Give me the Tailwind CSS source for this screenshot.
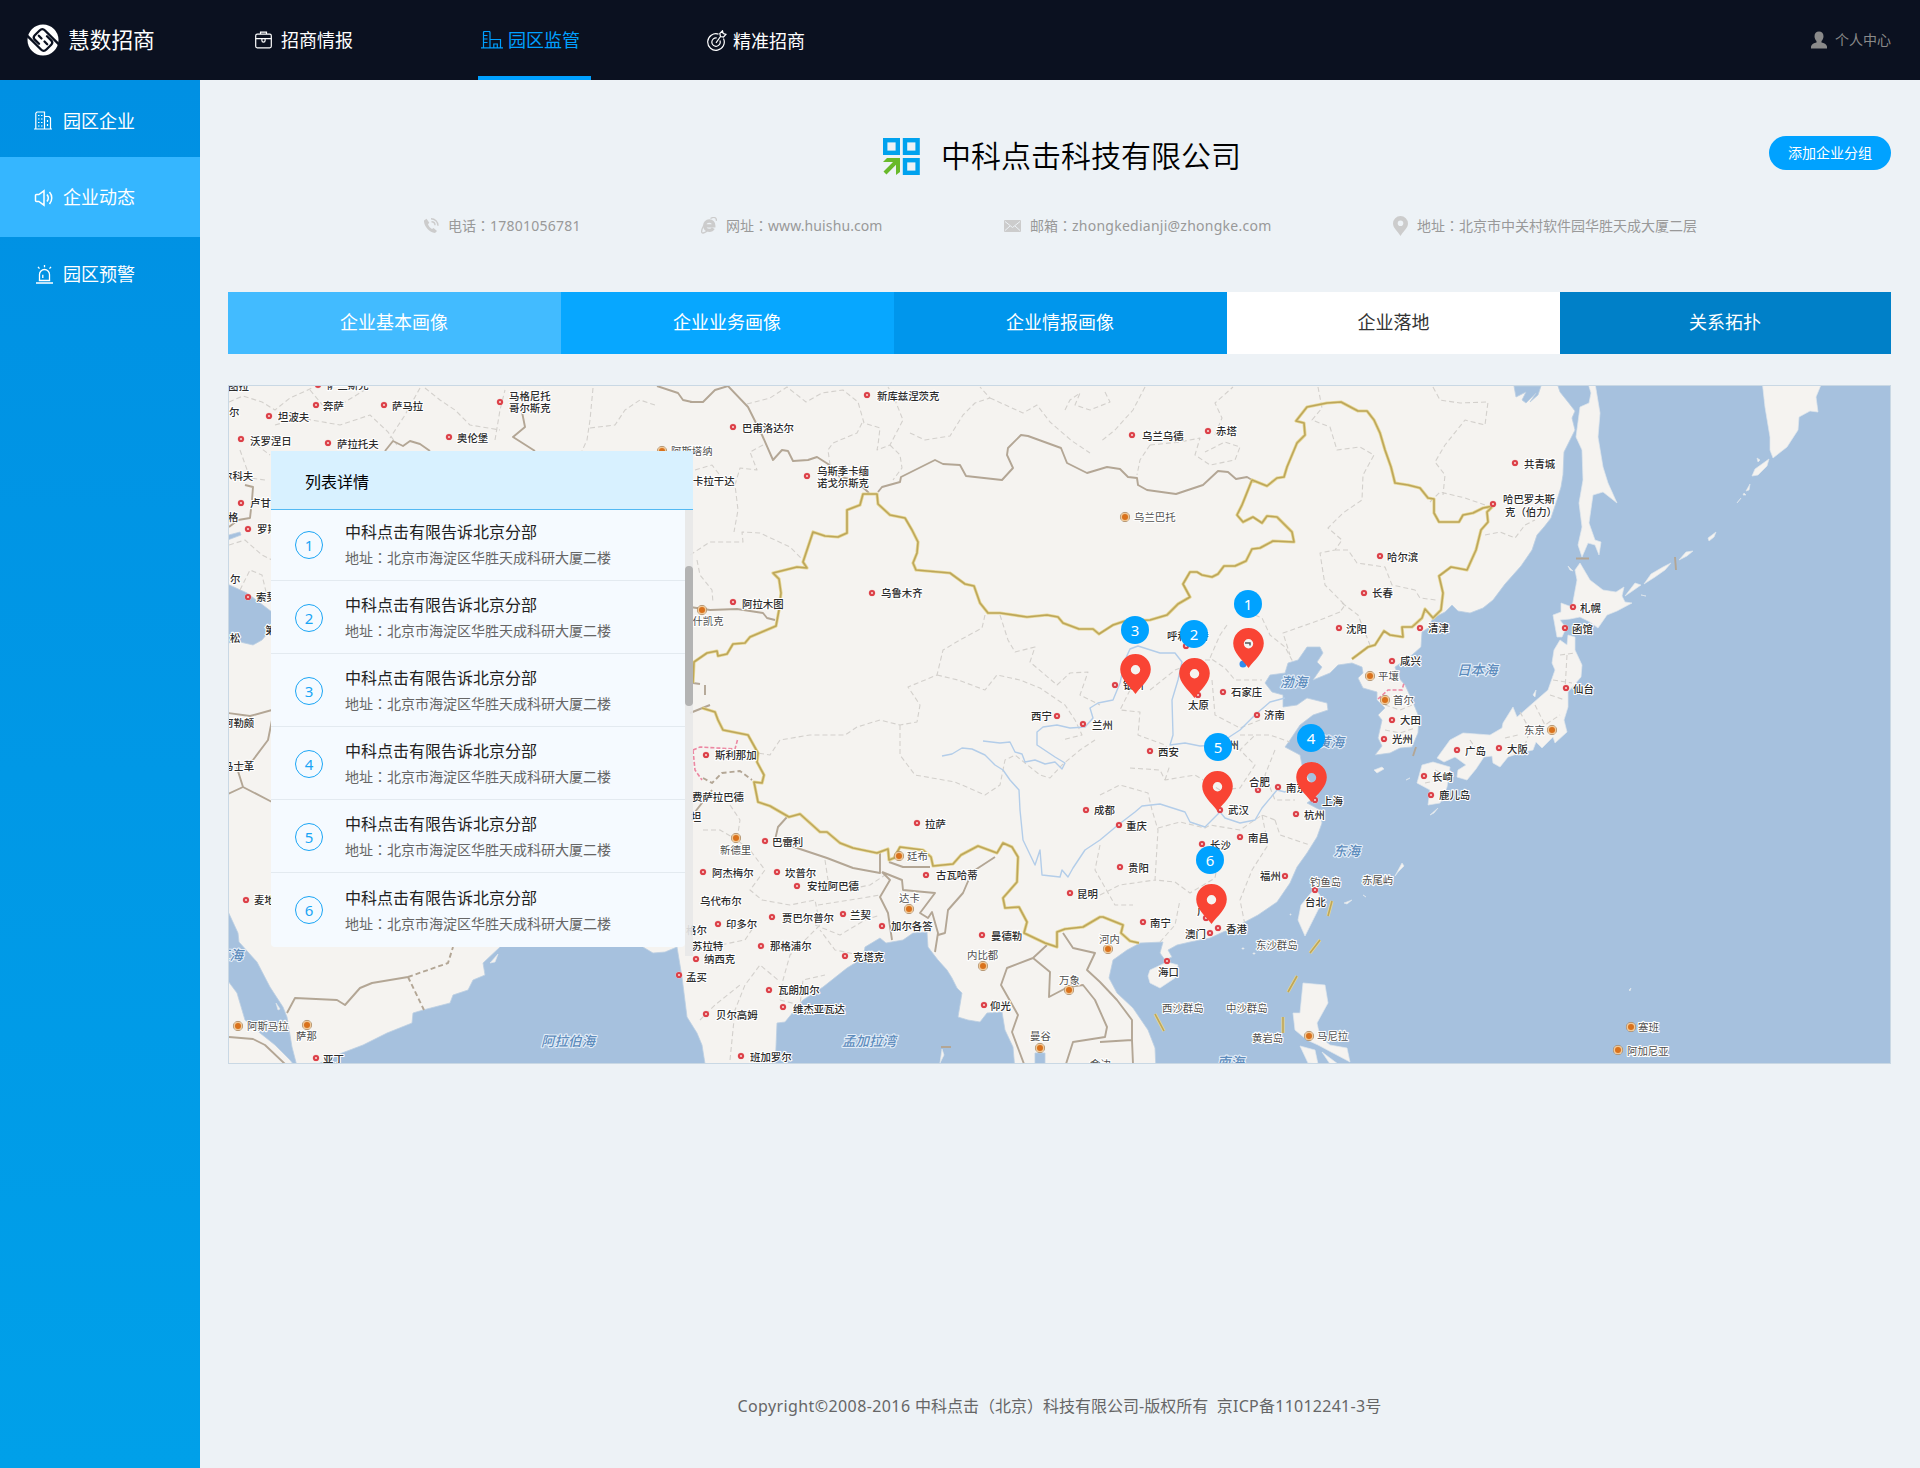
<!DOCTYPE html>
<html lang="zh-CN">
<head>
<meta charset="utf-8">
<title>慧数招商</title>
<script src="https://cdn.jsdelivr.net/npm/@tailwindcss/browser@4"></script>
</head>
<body class="flex h-[1468px] w-[1920px] flex-col overflow-hidden bg-[#edf2f6] font-['Noto_Sans','Noto_Sans_CJK_SC',sans-serif] text-[#222]">

<!-- top bar -->
<header class="flex h-20 shrink-0 items-center bg-[#0b1120] text-white">
  <div class="flex w-[252px] items-center pl-[27px]">
    <svg class="size-8 shrink-0" viewBox="0 0 32 32">
      <circle cx="16" cy="16" r="15.500" fill="#fff"/>
      <g fill="none" stroke="#0b1120" stroke-width="2.300" stroke-linecap="round">
        <path d="M-1 10.500 14 25.500c1.800 1.800 3.600 1.800 5.400 0l4.800-4.800c1.500-1.500 1.500-2.800 0-4.300L20 12.200"/>
        <path d="M33 21.500 18 6.500c-1.800-1.800-3.600-1.800-5.400 0L7.800 11.300c-1.500 1.500-1.500 2.800 0 4.300L12 19.800"/>
        <path d="M11.800 11.800 14.500 14.500M20.200 20.200 17.500 17.500"/>
      </g>
    </svg>
    <span class="ml-[9px] text-[21.700px] leading-8 whitespace-nowrap">慧数招商</span>
  </div>
  <nav class="flex h-full gap-[113px] text-lg whitespace-nowrap">
    <a class="flex w-[113px] items-center pl-[3px]">
      <svg class="mr-[9px] h-[18px] w-[17px]" viewBox="0 0 17 18" fill="none" stroke="#fff" stroke-width="1.200"><rect x=".7" y="3.200" width="15.600" height="13.600" rx="1.500"/><path d="M5.500 3V1.200h6V3M.7 7.700h15.600M6.900 7.700v1.800a1.600 1.600 0 0 0 3.200 0V7.700"/></svg>
      <span>招商情报</span>
    </a>
    <a class="flex w-[113px] items-center border-b-4 border-[#00a0ff] pt-[3px] pl-[3px] text-[#00a0ff]">
      <svg class="mr-[5px] h-[18px] w-[22px]" viewBox="0 0 22 18" fill="none" stroke="currentColor" stroke-width="1.200"><path d="M0 16.800h22M2.500 16.500V1.500a1 1 0 0 1 1-1h4.500a1 1 0 0 1 1 1v15M2.500 4.500h4M2.500 8h4M2.500 11.500h4M9 8.500h10.500V16.500M12.800 16.500v-3.500h3.500v3.500"/></svg>
      <span>园区监管</span>
    </a>
    <a class="flex w-[113px] items-center pt-0.5 pl-[3px]">
      <svg class="mr-[6px] h-[22px] w-5" viewBox="0 0 20 22" fill="none" stroke="#fff" stroke-width="1.200"><path d="M11.500 4.100A8.300 8.300 0 1 0 16.500 8.500M9.800 8a4.200 4.200 0 1 0 3.100 2.500M9 12.800 13.500 6.500M13.500 6.500 12.800 3.500 15.500.8l.7 2.700 2.800.8-2.500 2.700z"/></svg>
      <span>精准招商</span>
    </a>
  </nav>
  <div class="mr-[29px] ml-auto flex items-center text-sm text-[#8a8a8a]">
    <svg class="mr-2 h-[18px] w-4" viewBox="0 0 16 18" fill="#8a8a8a"><path d="M8 .5c2.800 0 4.500 2 4.500 4.700 0 2-1 3.800-2 4.800v1.500c2.500.8 5 1.500 5.500 4V17.500H0v-2c.5-2.500 3-3.200 5.500-4V10c-1-1-2-2.800-2-4.800C3.500 2.500 5.200.5 8 .5z"/></svg>
    <span>个人中心</span>
  </div>
</header>

<div class="flex min-h-0 flex-1">
  <!-- side menu -->
  <aside class="w-[200px] shrink-0 bg-linear-to-b from-[#0090e3] to-[#00a0e9] text-lg text-white">
    <a class="flex h-[77px] items-center pl-[34px]">
      <svg class="mt-1 mr-[11px] h-[19px] w-[18px]" viewBox="0 0 18 19" fill="none" stroke="#fff" stroke-width="1.200"><path d="M0 18h18M1.800 18V2.200L3 1h7.500v17M10.500 5.500H15l1.500 1.500v11M4 4.500h1.500M7 4.500h1.500M4 8h1.500M7 8h1.500M4 11.500h1.500M7 11.500h1.500M4 15h1.500M7 15h1.500M13.500 9v2M13.500 13v2"/></svg>
      <span class="mt-1">园区企业</span>
    </a>
    <a class="flex h-[80px] items-center bg-[#35b6ff] pl-[34px]">
      <svg class="mt-0.5 mr-[9px] h-[18px] w-5" viewBox="0 0 20 18" fill="none" stroke="#fff" stroke-width="1.500"><path d="M4.800 12.500H2.500a1 1 0 0 1-1-1v-5a1 1 0 0 1 1-1H4.800L10 1.800v14.400zM13 5.500c1.500 2 1.500 5 0 7M15.500 3c3 3.500 3 8.500 0 12"/></svg>
      <span>企业动态</span>
    </a>
    <a class="flex h-[74px] items-center pl-[35px]">
      <svg class="mr-[9px] h-[19px] w-[19px]" viewBox="0 0 19 19" fill="none" stroke="#fff" stroke-width="1.300"><path d="M1 18h17M3.800 15.500h11.400M4.500 15.500V9.500a5 5 0 0 1 10 0v6M7.800 13V9.800M9.500 0v2.200M3 1.800l1.500 1.800M16 1.800l-1.500 1.800"/></svg>
      <span class="-mt-px">园区预警</span>
    </a>
  </aside>

  <main class="flex flex-1 flex-col pr-[29px] pl-7">
    <!-- company heading -->
    <div class="mt-[52px] flex h-11 items-center pl-[655px]">
      <svg class="mt-1 size-[37px]" viewBox="0 0 37 37"><g fill="none" stroke="#00a2ee" stroke-width="4.400"><rect x="2.200" y="2.200" width="12.600" height="12.600"/><rect x="22" y="2.200" width="12.600" height="12.600"/><rect x="22" y="22.200" width="12.600" height="12.600"/></g><path fill="#68b92a" d="M4 20h13v14l-4 3V26.800L3.500 36.500.5 33.500 10 24H0z"/></svg>
      <h1 class="ml-[21px] font-['Noto_Sans_CJK_SC',sans-serif] text-[30px] leading-10 font-[350] whitespace-nowrap text-black">中科点击科技有限公司</h1>
      <button class="mb-[3px] ml-auto h-[34px] w-[122px] rounded-full bg-[#00a2ff] text-sm text-white">添加企业分组</button>
    </div>
    <!-- contact details -->
    <div class="mt-[39px] ml-[196px] grid h-5 grid-cols-[277px_303px_389px_auto] items-center text-sm whitespace-nowrap text-[#999]">
      <div class="flex items-center">
        <svg class="mr-[9px] size-[15px]" viewBox="0 0 15 15"><path fill="#ccc" d="M0 2.500 2.500.8l2.800 4L4 6.300c.8 2 2 3.500 4 4.800l1.600-1L13 13l-2 2C5 14.500-.5 7.500 0 2.500z"/><path d="M7 .8c4 0 7 3 7 7M7.500 3.800c2 0 3.500 1.500 3.500 3.500" fill="none" stroke="#ccc" stroke-width="1.400"/></svg>
        <span>电话<span lang="zh-TW" class="font-['Noto_Sans_CJK_TC']">：</span><span class="tracking-[.25px]">17801056781</span></span>
      </div>
      <div class="flex items-center">
        <svg class="mr-[9px] h-[17px] w-4" viewBox="0 0 16 17" fill="none" stroke="#ccc"><path stroke-width="3.300" d="M3.500 8.800h9.300c0-3-2-4.800-4.500-4.800-2.700 0-4.700 2-4.700 4.700s2 4.700 4.700 4.700c1.900 0 3.200-.8 4-2.200"/><path stroke-width="1.300" d="M9.500 1.500C13-.3 15.800.2 15.300 3.800M2.500 9C.3 13-.2 16.300 2.200 16c1.300-.1 2.700-1 4-2"/></svg>
        <span>网址<span lang="zh-TW" class="font-['Noto_Sans_CJK_TC']">：</span><span class="tracking-[.1px]">www.huishu.com</span></span>
      </div>
      <div class="flex items-center">
        <svg class="mr-[9px] h-3 w-[17px]" viewBox="0 0 17 12"><rect width="17" height="12" rx="1" fill="#ccc"/><path d="m1 1.500 7.500 6 7.500-6M1 10.500l5-4.500M16 10.500 11 6" fill="none" stroke="#edf2f6"/></svg>
        <span>邮箱<span lang="zh-TW" class="font-['Noto_Sans_CJK_TC']">：</span><span class="tracking-[.25px]">zhongkedianji@zhongke.com</span></span>
      </div>
      <div class="flex items-center">
        <svg class="mr-[9px] h-5 w-[15px]" viewBox="0 0 15 20"><path fill="#ccc" fill-rule="evenodd" d="M7.500 0A7.500 7.500 0 0 1 15 7.500C15 12 10.500 15 7.500 20 4.500 15 0 12 0 7.500A7.500 7.500 0 0 1 7.500 0zm0 4.500a2.800 2.800 0 1 0 0 5.600 2.800 2.800 0 0 0 0-5.600z"/></svg>
        <span>地址<span lang="zh-TW" class="font-['Noto_Sans_CJK_TC']">：</span>北京市中关村软件园华胜天成大厦二层</span>
      </div>
    </div>
    <!-- tabs -->
    <div class="mt-[57px] grid h-[62px] shrink-0 grid-cols-[333px_333px_333px_333px_331px] text-center text-lg leading-[61px] text-white">
      <a class="bg-[#42bbff] pr-px">企业基本画像</a>
      <a class="bg-[#07a7ff] pr-px">企业业务画像</a>
      <a class="bg-[#0096ec] pr-px">企业情报画像</a>
      <a class="bg-white text-[#333]">企业落地</a>
      <a class="bg-[#0080c8] pr-px">关系拓扑</a>
    </div>

    <!-- map -->
    <section class="relative mt-[31px] h-[679px] shrink-0 overflow-hidden border border-[#c9d8e4]">
      <svg id="map" class="absolute inset-0 h-[677px] w-[1661px]" viewBox="229 386 1661 677">
        <rect x="228" y="385" width="1663" height="679" fill="#f5f3f0"/>
        <g fill="#a6c1de" stroke="#bccfe2" stroke-width=".8" stroke-linejoin="round">
          <path d="M1556 380 1560 392 1568 402 1575 411 1572 418 1575 430 1570 440 1564 452 1563 475 1561 487 1557 500 1551 518 1544 527 1537 535 1532 550 1521 566 1505 584 1493 600 1483 608 1470 613 1458 611 1452 605 1445 612 1433 618 1428 628 1422 632 1421 647 1412 655 1395 667 1398 677 1405 685 1412 700 1419 717 1418 733 1412 747 1400 748 1390 753 1375 755 1382 746 1378 738 1382 720 1378 715 1385 708 1377 700 1377 692 1363 688 1358 678 1363 673 1362 667 1352 663 1338 665 1330 673 1313 680 1322 667 1317 662 1323 653 1320 647 1307 647 1298 660 1288 663 1285 673 1270 675 1265 683 1272 692 1283 695 1283 707 1297 705 1307 698 1327 703 1328 710 1313 715 1300 725 1290 740 1285 747 1300 755 1303 770 1312 785 1318 795 1307 803 1320 810 1322 823 1317 837 1307 853 1297 867 1290 883 1277 902 1258 915 1243 923 1223 932 1210 938 1190 942 1177 945 1168 950 1172 957 1165 960 1160 953 1163 942 1140 943 1127 950 1113 960 1109 978 1117 993 1133 1008 1148 1030 1155 1048 1156 1070H1895V380z"/>
          <path d="M775 1070 777 1023 785 1022 803 1000 823 987 847 968 863 958 865 947 880 938 886 943 903 940 913 933 927 932 928 947 938 960 947 970 952 978 957 988 962 993 958 1017 968 1020 980 1022 987 1013 1002 1012 1005 1030 1013 1047 1015 1070z"/>
          <path d="M1035 1070V1053L1045 1053V1070z"/>
          <path d="M305 1070 342 1053 363 1045 387 1033 412 1023 413 1013 423 1010 450 1003 453 995 468 990 473 980 485 975 483 963 500 947V930H630L643 947 653 953 665 952 677 947 682 977 687 1017 697 1033 702 1045 706 1070z"/>
          <path d="M225 905 238 933 239 942 257 962 270 987 283 1007 287 1017 292 1047 298 1070 290 1060 275 1045 260 1033 245 1020 237 993 225 977z"/>
          <path d="M225 583 247 593 272 612V628L262 640 253 645 240 642 225 643zM225 536 240 532 241 535 225 541z"/>
          <path d="M1514 386 1516 397 1526 392 1522 400 1526 403 1536 393 1530 402 1538 395 1541 386z"/>
        </g>
        <!-- islands and peninsulas -->
        <g fill="#f5f3f0" stroke="#dfe6ec" stroke-width=".7" stroke-linejoin="round">
          <path d="M1588 383 1595 383 1600 413 1598 437 1603 467 1608 483 1617 503 1603 492 1593 495 1589 523 1595 540 1601 542 1599 555 1595 545 1588 543 1582 557 1578 545 1582 527 1579 503 1583 480 1582 450 1576 437 1580 407 1589 403 1591 393z"/>
          <path d="M1762 380 1765 407 1770 437 1770 450 1773 458 1787 447 1798 430 1799 417 1810 411 1818 412 1816 397 1823 380z"/>
          <path d="M1752 476 1755 469 1769 459 1767 466 1758 475zM1746 491 1750 484 1749 490zM1757 458 1760 460 1758 462zM1744 493 1746 495 1743 495zM1737 503 1741 498zM1708 538 1716 532 1714 537 1709 541zM1679 560 1686 552 1693 551 1687 556zM1644 584 1651 574 1663 567 1671 563 1665 570 1655 577zM1625 596 1635 583 1641 585 1631 592zM1641 595 1646 596z"/>
          <path d="M1580 563 1590 580 1603 590 1616 592 1624 587 1622 596 1625 602 1632 603 1617 611 1607 615 1598 628 1590 622 1580 617 1570 619 1560 620 1566 628 1562 637 1557 637 1553 615 1561 612 1561 603 1572 607 1577 580 1575 570zM1568 566 1573 571 1570 570zM1533 695 1536 690 1535 697z"/>
          <path d="M1560 640 1567 645 1568 635 1575 637 1575 650 1582 665 1581 677 1568 692 1568 707 1564 720 1567 732 1555 743 1553 737 1542 748 1536 742 1533 750 1520 753 1508 757 1500 767 1493 763 1492 756 1484 757 1476 769 1467 780 1457 777 1458 770 1466 765 1455 757 1444 762 1437 758 1450 740 1463 733 1490 735 1502 728 1503 723 1513 707 1517 717 1533 703 1548 690 1555 670 1552 663 1554 650z"/>
          <path d="M1422 765 1433 762 1450 767 1447 787 1440 803 1428 805 1430 790 1417 783zM1374 770 1382 767 1384 769 1377 773zM1430 815 1438 808 1434 813zM1406 780 1410 778z"/>
          <path d="M1315 888 1323 900 1313 920 1305 936 1298 920 1301 905zM1395 876 1402 863 1404 866 1398 872zM1344 903 1352 900 1347 904zM1363 895 1366 897z"/>
          <path d="M1150 970 1167 962 1178 965 1175 978 1160 988 1150 983 1148 976z"/>
          <path d="M1303 983 1325 985 1328 1003 1317 1023 1320 1037 1330 1045 1347 1048 1350 1062 1333 1053 1318 1045 1307 1040 1295 1030 1293 1013 1300 1013zM1300 1046 1315 1050 1318 1064 1308 1063zM1322 1052 1330 1064H1338z"/>
          <path d="M940 1063 942 1049 944 1055zM1629 990 1631 988 1630 991zM1242 948h2v1h-2zM1253 953h2v1h-2zM1290 914h1v1h-1zM490 963 498 954 495 962zM276 1003 280 1009 278 1010z"/>
        </g>
        <!-- province lines -->
        <g fill="none" stroke="#d3d0cc" stroke-width="1.100" stroke-dasharray="5 3" stroke-linejoin="round">
          <path d="M229 402 243 396 262 402 275 410 290 398 312 388M275 425 300 418 340 425 370 415 388 432 397 445M310 390 325 408 345 402 368 388M420 388 405 415 390 438M425 388 440 400 455 410 470 425 500 430M495 440 500 410 505 390M593 388 590 420 587 440 582 451M590 428 615 425 625 410 640 400 655 405M240 450 250 478 265 480M229 545 245 540 262 555 272 560M240 590 250 570 262 575 268 600M250 440 270 455"/>
          <path d="M747 404 770 398 787 387 806 402 822 393 843 390 858 402 864 423 880 428 878 445 877 450 890 445 903 420 893 395 888 387M862 423 857 433 833 443 828 450 830 465M763 445 750 452 757 470 740 468 735 485 738 510 734 532M695 470 712 465 722 478 735 485M890 445 900 455 902 468 893 480M910 433 925 440 950 436 963 415 975 403 990 398 980 387M990 398 1023 413 1037 405 1050 422 1072 441 1090 453M1065 410 1070 400 1080 393 1075 405 1090 410 1110 402 1105 392"/>
          <path d="M690 555 710 542 743 542 742 532 760 533 790 547 803 560M697 560 700 575 712 590 713 603M985 615 982 628 960 640 943 650 937 675 908 687 920 705 917 722 900 725 880 720 857 727 845 735 810 735 780 740 770 755 758 753M937 675 958 680 985 690 997 675 1020 680 1040 688 1065 705 1075 720 1082 735 1062 740M1000 615 1008 640 1015 652 1035 647 1030 662 1057 685 1070 673 1088 672 1080 695 1100 705M900 725 900 755 915 775 955 782 985 795 1000 785 1005 760 1015 755 1040 775 1050 778 1062 765 1080 750 1095 740"/>
          <path d="M1145 387 1133 410 1115 430 1100 442M1215 435 1222 418 1215 403 1233 387M1150 445 1140 460 1137 475M1150 445 1180 442 1200 438 1195 455 1210 465 1235 460 1240 447 1225 442 1205 452M1318 387 1322 408 1312 420 1330 427 1337 450 1360 447 1374 455 1363 475 1362 500 1343 513 1328 528 1342 540 1335 550 1320 553 1325 585 1345 605 1340 612M1433 387 1440 400 1460 403 1488 402 1485 425 1465 420 1445 445 1435 462 1445 475 1443 495M1335 550 1348 550 1357 563 1385 567 1392 585 1415 590 1420 598 1436 600M1342 603 1358 615 1370 645M1340 612 1320 620 1283 633 1290 655M1430 502 1440 492 1465 498 1485 505M1485 535 1500 532 1515 538 1525 525 1535 520"/>
          <path d="M1255 615 1262 618 1270 635 1285 647 1293 662M1227 625 1220 635 1210 658 1225 668 1235 680 1262 680M1150 690 1175 670 1200 660 1212 660M1130 690 1120 710 1140 712 1138 735 1165 745 1172 755M1212 680 1215 715 1240 728 1260 720M1130 768 1160 770 1165 780 1195 775 1220 790 1240 788 1255 765 1240 750 1255 735M1165 780 1170 765M1100 795 1120 785 1148 793 1152 810 1158 830 1155 880 1175 882M1158 828 1180 822 1205 828 1210 825 1240 830 1262 815 1275 820M1262 815 1268 845 1252 870 1240 900 1245 925M1100 895 1120 885 1155 880M1175 882 1190 893 1215 878 1220 850M1160 942 1175 925 1180 900M1240 735 1270 735 1290 742M1275 750 1265 775 1275 800 1295 800M1275 820 1280 835 1310 845M1100 845 1095 870 1115 905 1133 905"/>
          <path d="M730 805 740 820 737 840 750 850 765 870 750 890 762 900 790 905 815 900 820 925 790 955 783 980 780 1000M703 830 720 830 737 840M825 860 828 880 845 890 870 885 885 875M818 905 850 900 880 895M815 925 840 935 865 920 880 915M730 1060 735 1010 745 985 760 965 778 980M690 950 720 945 745 940 755 925M860 955 835 950 820 930M700 1020 715 1005 740 985M780 1000 800 1005 803 980 825 975"/>
          <path d="M1560 655 1575 653M1567 655 1565 690M1553 680 1572 683M1550 695 1565 700M1535 705 1545 725 1560 715M1520 712 1530 730 1525 745M1505 738 1518 735M1470 740 1480 755M1435 770 1445 775M1425 783 1440 780M1385 705 1400 710 1412 705M1385 730 1400 733 1415 728"/>
        </g>
        <!-- rivers -->
        <g fill="none" stroke="#b3cde9" stroke-width="1.400" stroke-linejoin="round">
          <path d="M942 756 952 754 962 748 972 749 985 755 995 765 1003 770 1010 780 1019 790 1020 810 1023 840 1035 865 1040 850 1042 875 1060 877 1062 870 1068 877 1073 868 1085 850 1100 840 1118 825 1135 812 1142 806 1160 804 1185 812 1190 822 1205 827 1220 812 1225 818 1240 823 1255 820 1262 808 1277 790 1285 792 1295 785 1310 795"/>
          <path d="M983 741 1000 743 1010 742 1015 752 1022 754 1025 762 1035 760 1045 764 1055 762 1062 769 1065 763 1055 757 1037 745 1037 732 1043 727 1057 725 1070 728 1085 727 1093 718 1090 708 1098 703 1113 700 1120 683 1125 660 1130 649 1138 646 1160 653 1175 653 1182 662 1178 680 1172 700 1173 735 1170 745 1185 743 1200 746 1217 745 1240 730 1255 715 1270 702 1285 698"/>
        </g>
        <!-- country borders -->
        <g fill="none" stroke="#b3a695" stroke-width="1.900" stroke-linejoin="round">
          <path d="M690 402 703 402 715 390 728 386 748 407 762 435 773 460 782 450 788 451 793 461 808 460 817 457 828 464 840 477 855 480 869 493M878 492 882 487 900 482 901 477 935 460 943 464 960 465 966 476 1002 480 1013 468 1007 455 1008 448 1021 435 1028 436 1061 448 1067 463 1087 473 1107 467 1120 469 1128 477 1137 478 1138 485 1147 490 1176 494 1203 485 1218 471 1228 472 1236 479 1247 477 1252 480M657 386 678 393 683 400 692 402M690 607 710 610 737 609 763 613 767 618 775 620M385 451 393 441 403 446 410 441 420 444 430 451M522 412 525 427 513 437 535 451"/>
          <path d="M245 485 253 487 252 500 250 518 238 520 229 527M228 713 250 716 272 710M272 720 268 740 253 760 237 768 243 787 272 802M243 787 228 794M287 1013 295 998 337 1000 345 1005 360 988 372 983 408 977M229 1037 253 1039 265 1045 285 1064M693 683 700 684M705 685V695M690 713 710 705"/>
          <path d="M787 817 778 827 775 840 797 848 827 858 853 868 880 873 880 853M889 862 903 867 930 867M882 872 890 880 880 897 888 913 892 940M882 872 902 880 903 890 935 893 920 913 928 918 932 912 938 933 935 952M995 857 972 872 963 893 948 910 945 933 938 935M1047 945 1033 958 1007 968 1001 985 1018 1015 1012 1032 1024 1064M1033 958 1050 972 1049 997 1068 987 1083 985 1095 1000 1107 1027 1105 1037 1073 1042 1066 1064M1063 933 1073 948 1095 953 1087 970 1100 982 1117 1000 1132 1020 1132 1040 1100 1042M1132 1040 1133 1064M695 812 712 790"/>
          <path stroke-dasharray="5 3" d="M408 977 448 963 453 947M408 977 424 1010M703 778 712 783 722 773 740 771 752 780"/>
          <path d="M1576 558.500H1589M1675 557 1676 570M1413 756 1416 747M941 1047H951"/>
        </g>
        <path d="M693 750 700 747 735 749 738 738M693 750 695 770 702 780M1378 699 1388 690 1402 690 1404 683" fill="none" stroke="#ec87a2" stroke-width="1.600" stroke-dasharray="4 2"/>
        <defs>
          <path id="goldline" d="M693 683 694 662 707 653 717 651 718 656 727 654 733 644 745 643 750 637 776 626 779 610 781 593 779 579 773 573 797 567 807 568 803 562 813 532 825 536 838 537 847 533 847 510 860 505 863 494 877 494 878 504 890 515 905 518 912 530 918 542 917 553 913 563 916 570 950 573 965 584 974 586 980 603 988 613 1000 613 1027 617 1047 615 1058 617 1063 623 1079 629 1093 629 1099 634 1113 625 1125 621 1150 620 1167 615 1178 604 1190 597 1183 584 1190 572 1197 572 1202 575 1212 577 1218 574 1224 566 1235 566 1246 561 1252 549 1260 548 1273 541 1294 542 1292 532 1277 517 1267 516 1262 523 1253 517 1243 522 1237 515 1242 505 1252 480 1267 486 1277 478 1284 477 1287 467 1297 443 1305 435 1304 423 1296 421 1307 407 1327 403 1341 402 1358 411 1367 411 1374 420 1380 433 1385 450 1391 467 1395 483 1408 485 1420 488 1428 498 1434 499 1434 513 1439 522 1459 522 1463 515 1473 513 1483 508 1493 506 1487 512 1488 522 1481 530 1476 550 1467 570 1451 567 1439 576 1443 593 1441 610 1433 618 1425 609 1422 618 1412 627 1402 627 1403 637 1390 635 1384 631 1375 645 1368 647 1352 659M702 708 715 712 718 720 723 730 748 735 758 753 757 762 764 775 762 783 754 782 758 802 770 806 789 817 800 814 820 832 827 832 840 843 853 848 877 853 888 849 889 860 894 858 900 847 923 850 931 857 933 866 953 864 961 855 978 846 997 853 1003 843 1012 847 1018 857 1017 882 1003 898 1005 908 1019 907 1027 922 1024 933 1045 943 1057 947 1057 932 1065 929 1083 927 1100 917 1103 917 1123 925 1121 933 1130 941 1139 943M1332 901 1328 916M1320 940 1310 953M1297 976 1288 992M1283 1017V1033M1155 1014 1164 1031"/>
        </defs>
        <g fill="none" stroke-linejoin="round">
          <use href="#goldline" stroke="#e6d795" stroke-width="3.200"/>
          <use href="#goldline" stroke="#bda65a" stroke-width="1.600"/>
        </g>
        <g id="labels" class="font-['Noto_Sans_CJK_SC',sans-serif] text-[10.400px] font-medium" stroke="#fff" stroke-width="2.200" stroke-linejoin="round" paint-order="stroke"></g>
        <circle cx="1243" cy="664" r="3.500" fill="#2f8cf0"/>
        <path d="M1245 643h5v2.500" fill="none" stroke="#555" stroke-width="1.500"/>
      </svg>

      <!-- numbered pins -->
      <div id="pins" class="absolute inset-0"></div>

      <!-- branch list -->
      <div class="absolute top-[65px] left-[42px] w-[422px]">
        <div class="h-[58.500px] border-b border-[#53b9f3] bg-[#d8f1ff] pl-[34px] text-base leading-[62px] text-black">列表详情</div>
        <div class="flex items-start">
          <ul id="rows" class="w-[414px] overflow-hidden rounded-b-sm bg-[#f5faff] pb-px"></ul>
          <div class="h-[446px] w-2 bg-[#e8e8e8]/90 pt-[56px]"><div class="h-[140px] rounded bg-[#b3b3b3]"></div></div>
        </div>
      </div>
    </section>

    <footer class="mt-[327px] text-center text-base leading-7 whitespace-pre text-[#666]"><span class="tracking-[.4px]">Copyright©2008-2016 </span>中科点击<span lang="zh-TW" class="font-['Noto_Sans_CJK_TC']">（</span>北京<span lang="zh-TW" class="font-['Noto_Sans_CJK_TC']">）</span>科技有限公司-版权所有 <span class="tracking-[.25px]"> 京ICP备11012241-3号</span></footer>
  </main>
</div>

<script>
// city: [dot x, dot y, text x, text centre y, name]
const cities = [
[269,416,278,417,'坦波夫'],[316,405,323,406,'奔萨'],[384,405,392,406,'萨马拉'],[500,402,509,396,'马格尼托'],[0,0,509,408,'哥尔斯克'],[0,0,229,412,'尔'],
[241,439,250,441,'沃罗涅日'],[328,443,337,444,'萨拉托夫'],[449,437,457,438,'奥伦堡'],[318,385,327,385,'萨兰斯克'],[0,0,228,386,'图拉'],
[0,0,222,476,'尔科夫'],[241,503,250,503,'卢甘'],[0,0,228,517,'格'],[248,529,257,529,'罗斯'],[0,0,230,579,'尔'],[248,597,256,597,'索契'],[0,0,265,630,'第'],[0,0,230,638,'松'],
[0,0,223,723,'阿勒颇'],[0,0,223,766,'马士革'],[246,900,254,900,'麦地'],[316,1058,323,1059,'亚丁'],
[867,395,877,396,'新库兹涅茨克'],[733,427,742,428,'巴甫洛达尔'],[807,476,817,471,'乌斯季卡缅'],[0,0,817,483,'诺戈尔斯克'],[0,0,693,481,'卡拉干达'],
[733,602,742,604,'阿拉木图'],[872,593,881,593,'乌鲁木齐'],[1057,716,1031,716,'西宁'],[1083,724,1092,725,'兰州'],
[706,755,715,755,'斯利那加'],[0,0,692,797,'费萨拉巴德'],[0,0,691,817,'坦'],[765,841,772,842,'巴雷利'],[917,823,925,824,'拉萨'],
[703,872,712,873,'阿杰梅尔'],[777,872,785,873,'坎普尔'],[797,886,807,886,'安拉阿巴德'],[926,875,936,875,'古瓦哈蒂'],[0,0,700,901,'乌代布尔'],
[1070,893,1077,894,'昆明'],[718,924,726,924,'印多尔'],[772,917,782,918,'贾巴尔普尔'],[843,914,850,915,'兰契'],[882,926,891,926,'加尔各答'],[982,935,991,936,'曼德勒'],
[0,0,686,930,'格尔'],[0,0,692,946,'苏拉特'],[761,946,770,946,'那格浦尔'],[696,959,704,959,'纳西克'],[845,956,853,957,'克塔克'],[679,975,686,977,'孟买'],
[769,990,778,990,'瓦朗加尔'],[783,1007,793,1009,'维杰亚瓦达'],[706,1014,716,1015,'贝尔高姆'],[984,1005,990,1006,'仰光'],[741,1056,750,1057,'班加罗尔'],[1086,810,1094,810,'成都'],
[1132,435,1142,436,'乌兰乌德'],[1208,431,1216,431,'赤塔'],[1380,556,1387,557,'哈尔滨'],[1364,593,1372,593,'长春'],[1339,628,1346,629,'沈阳'],[1420,628,1428,628,'清津'],
[1392,661,1400,661,'咸兴'],[1392,720,1400,720,'大田'],[1186,646,1167,636,'呼和浩特'],[1115,685,1123,685,'银川'],[1198,695,1188,705,'太原'],[1223,692,1231,692,'石家庄'],[1257,715,1264,715,'济南'],
[1493,504,1503,499,'哈巴罗夫斯'],[0,0,1505,512,'克（伯力）'],[1150,751,1158,752,'西安'],[0,0,1218,745,'郑州'],[1384,739,1392,739,'光州'],[1457,750,1465,751,'广岛'],[1499,748,1507,749,'大阪'],
[1424,776,1432,777,'长崎'],[1431,795,1439,795,'鹿儿岛'],[1258,790,1249,782,'合肥'],[1278,787,1286,788,'南京'],[1315,800,1322,801,'上海'],[1296,814,1304,815,'杭州'],[1220,810,1228,810,'武汉'],
[1119,825,1126,826,'重庆'],[1240,837,1248,838,'南昌'],[1202,844,1210,845,'长沙'],[1120,867,1128,868,'贵阳'],[1285,876,1260,876,'福州'],[1315,890,1305,902,'台北'],
[1143,922,1150,923,'南宁'],[1206,918,1197,911,'广州'],[1218,928,1226,929,'香港'],[1210,933,1185,934,'澳门'],[1167,961,1158,972,'海口'],
[1515,463,1524,464,'共青城'],[1573,607,1580,608,'札幌'],[1565,628,1572,629,'函馆'],[1566,688,1573,689,'仙台']];
// capitals use a larger ringed marker
const capitals = [
[662,451,671,451,'阿斯塔纳'],[238,1026,247,1026,'阿斯马拉'],[307,1025,296,1036,'萨那'],[702,610,682,621,'比什凯克'],[736,838,720,850,'新德里'],[899,856,907,856,'廷布'],
[909,909,899,898,'达卡'],[983,966,967,955,'内比都'],[1069,990,1059,980,'万象'],[1040,1048,1030,1036,'曼谷'],[1108,949,1099,939,'河内'],[1125,517,1134,517,'乌兰巴托'],
[1370,676,1378,676,'平壤'],[1385,700,1393,700,'首尔'],[1309,1036,1317,1036,'马尼拉'],[1552,730,1524,730,'东京'],[1631,1027,1638,1027,'塞班'],[1618,1050,1627,1051,'阿加尼亚'],
[0,0,1310,882,'钓鱼岛'],[0,0,1362,880,'赤尾屿'],[0,0,1256,945,'东沙群岛'],[0,0,1162,1008,'西沙群岛'],[0,0,1226,1008,'中沙群岛'],[0,0,1252,1038,'黄岩岛'],[0,0,1090,1064,'金边']];
const seas = [[541,1041,'阿拉伯海'],[842,1041,'孟加拉湾'],[1457,670,'日本海'],[1280,682,'渤海'],[1317,742,'黄海'],[1333,851,'东海'],[1217,1062,'南海'],[216,955,'红海']];

let out = '';
for (const [dx, dy, tx, ty, name] of cities) {
  if (dx) out += `<circle cx="${dx}" cy="${dy}" r="3.100" fill="#dc4048" stroke="#f3cccb" stroke-width=".8"/><circle cx="${dx}" cy="${dy}" r="1.100" fill="#f7d5d3" stroke="none"/>`;
  out += `<text x="${tx}" y="${ty + 3.8}" fill="#2c2c2c">${name}</text>`;
}
for (const [dx, dy, tx, ty, name] of capitals) {
  if (dx) out += `<circle cx="${dx}" cy="${dy}" r="4.600" fill="#f0c898" stroke="#8f7558" stroke-width="1"/><circle cx="${dx}" cy="${dy}" r="3" fill="#d9721c" stroke="none"/>`;
  out += `<text class="font-normal" x="${tx}" y="${ty + 3.8}" fill="#4f4f4f">${name}</text>`;
}
for (const [x, y, name] of seas)
  out += `<text class="text-[13.500px] italic font-medium" x="${x}" y="${y + 5}" fill="#5d8cbd" stroke="#e4eef8">${name}</text>`;
document.getElementById('labels').innerHTML = out;

// [badge centre x, badge centre y, pin centre x, pin top y]
const pins = [[1248,604,1248,628],[1194,634,1194,658],[1135,630,1135,654],[1311,738,1311,762],[1218,747,1217,771],[1210,860,1211,884]];
document.getElementById('pins').innerHTML = pins.map(([bx, by, px, py], i) =>
  `<svg class="absolute h-10 w-[31px]" style="left:${px - 244.5}px;top:${py - 386}px" viewBox="0 0 31 40"><path fill="#f94434" fill-rule="evenodd" d="M15.500 0A15.300 15.300 0 0 1 30.800 15.300C30.800 25 22 31.500 15.500 40 9 31.500.2 25 .2 15.300A15.300 15.300 0 0 1 15.500 0zm0 11a4.700 4.700 0 1 0 0 9.400 4.700 4.700 0 0 0 0-9.400z"/></svg>
   <span class="absolute size-7 rounded-full bg-[#00a2ff] text-center text-[15px] leading-[29px] text-white" style="left:${bx - 243}px;top:${by - 400}px">${i + 1}</span>`).join('');

document.getElementById('rows').innerHTML = [1, 2, 3, 4, 5, 6].map(n =>
  `<li class="flex h-[73px] items-center border-b border-[#e3eaf0] pt-0.5 pl-6 first:h-[71px] first:pt-0 last:border-0">
    <span class="size-7 shrink-0 rounded-full border border-[#1aa5f5] text-center text-[15px] leading-[27px] text-[#1aa5f5]">${n}</span>
    <div class="ml-[22px] pt-px whitespace-nowrap"><p class="text-base leading-6 text-[#222]">中科点击有限告诉北京分部</p><p class="mt-px text-sm leading-6 text-[#666]">地址<span lang="zh-TW" class="font-['Noto_Sans_CJK_TC']">：</span>北京市海淀区华胜天成科研大厦二楼</p></div>
  </li>`).join('');
</script>
</body>
</html>
